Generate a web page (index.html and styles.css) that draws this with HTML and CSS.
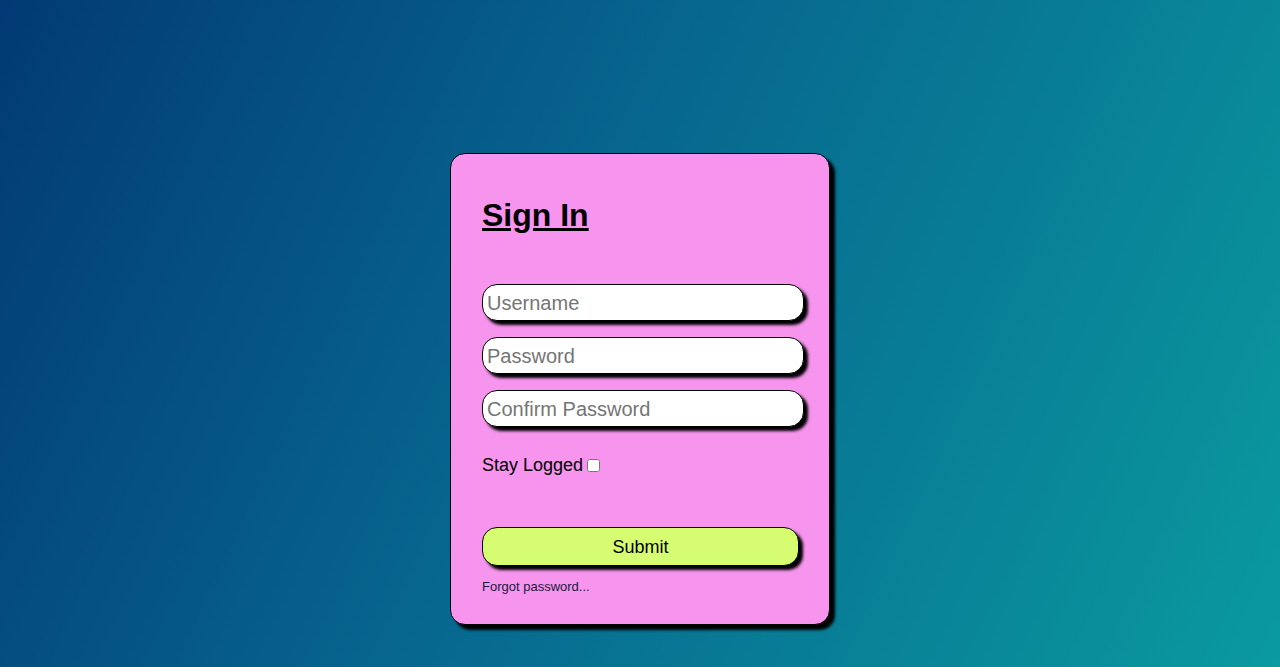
FILE: index.html
```html
<!DOCTYPE html>
<html lang="en">
<head>
<meta charset="utf-8">
<title>Sign In</title>
<link rel="stylesheet" href="styles.css">
</head>
<body>
<main class="page">
  <form class="card">
    <h1 class="title">Sign In</h1>
    <div class="fields">
      <input class="field" type="text" placeholder="Username">
      <input class="field" type="password" placeholder="Password">
      <input class="field" type="password" placeholder="Confirm Password">
    </div>
    <label class="stay">Stay Logged <input class="check" type="checkbox"></label>
    <button class="submit" type="button">Submit</button>
    <a class="forgot">Forgot password...</a>
  </form>
</main>
</body>
</html>
```

FILE: styles.css
```css
html, body {
  margin: 0;
  height: 100%;
}
body {
  font-family: "Liberation Sans", Arial, sans-serif;
  background: linear-gradient(115deg, #023a74 0%, #07678f 45%, #0a9a9f 100%);
  overflow: hidden;
}
.page {
  display: flex;
  justify-content: center;
  padding-top: 153px;
}
.card {
  box-sizing: border-box;
  width: 380px;
  height: 472px;
  background: #f794ee;
  border: 1px solid #000;
  border-radius: 15px;
  box-shadow: 5px 5px 3px #000;
  padding: 43px 32px 0 31px;
  display: flex;
  flex-direction: column;
  align-items: flex-start;
}
.title {
  margin: 0;
  font-size: 32px;
  font-weight: bold;
  text-decoration: underline;
  color: #000;
  line-height: 37px;
}
.fields {
  margin-top: 50px;
  display: flex;
  flex-direction: column;
  gap: 16px;
}
.field {
  box-sizing: border-box;
  width: 322px;
  height: 37px;
  border: 1px solid #000;
  border-radius: 15px;
  padding: 1px 4px 0;
  font-family: "Liberation Sans", Arial, sans-serif;
  font-size: 20px;
  background: #fff;
  box-shadow: 4px 4px 3px #000;
  outline: none;
}
.field::placeholder {
  color: #757575;
}
.stay {
  margin-top: 28px;
  font-size: 18px;
  line-height: 21px;
  color: #000;
  display: flex;
  align-items: center;
  gap: 4px;
}
.check {
  margin: 0;
  width: 13px;
  height: 13px;
}
.submit {
  margin-top: 51px;
  box-sizing: border-box;
  width: 317px;
  height: 39px;
  background: #d6fc72;
  border: 1px solid #000;
  border-radius: 15px;
  box-shadow: 4px 4px 3px #000;
  font-family: "Liberation Sans", Arial, sans-serif;
  font-size: 18px;
  color: #000;
  padding: 1px 0 0;
}
.forgot {
  margin-top: 13px;
  font-size: 13px;
  line-height: 15px;
  color: #1a1a3a;
}
```
